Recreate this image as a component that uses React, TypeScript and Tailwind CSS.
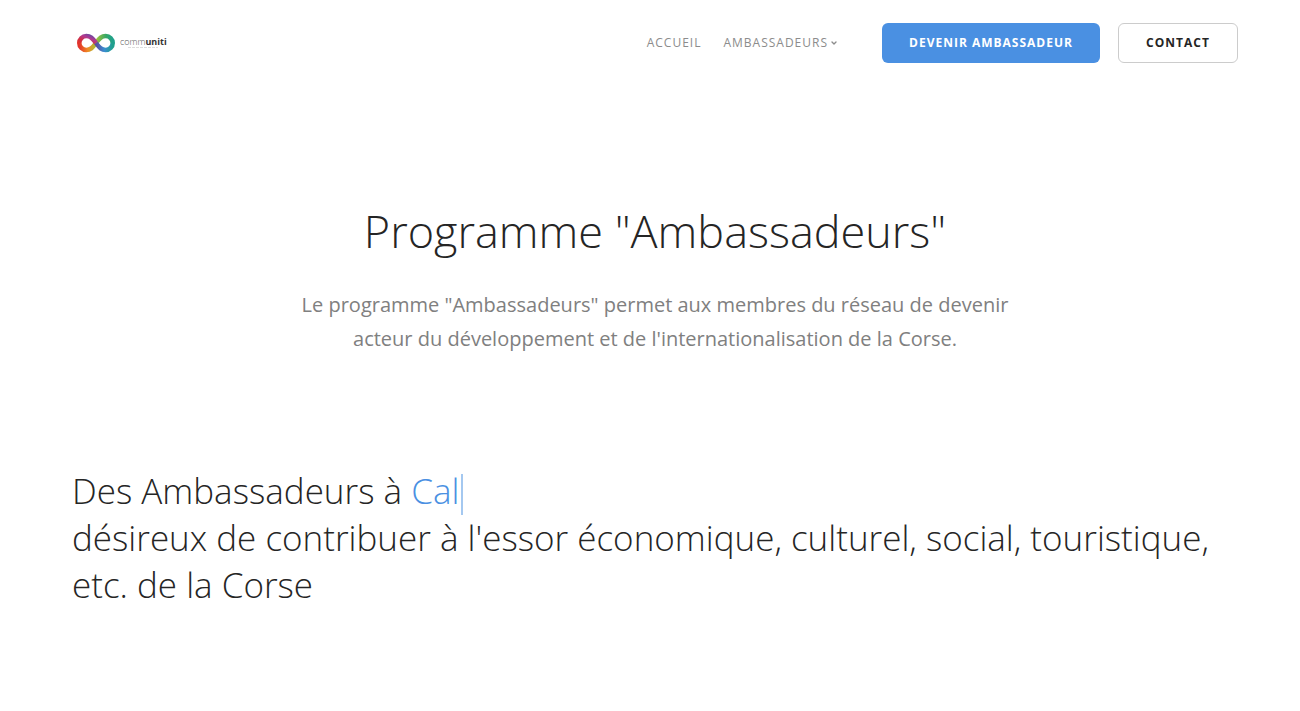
import { ChevronDown } from "lucide-react";

const navLink = "text-[12px] leading-5 tracking-[1px] text-[#8c8c8c]";

const Logo = () => (
  <svg
    viewBox="0 0 40 20"
    className="h-5 w-10"
    fill="none"
    strokeWidth="4.6"
    aria-hidden="true"
  >
    <defs>
      <linearGradient id="warm" x1="0" y1="1" x2="1" y2="0">
        <stop offset="0" stopColor="#e2352b" />
        <stop offset="0.3" stopColor="#cf2e45" />
        <stop offset="0.65" stopColor="#b03a92" />
        <stop offset="1" stopColor="#5b4aa0" />
      </linearGradient>
      <linearGradient id="warmLow" x1="0" y1="0" x2="1" y2="0">
        <stop offset="0" stopColor="#e2352b" />
        <stop offset="0.5" stopColor="#f08a24" />
        <stop offset="1" stopColor="#a5c23a" />
      </linearGradient>
      <linearGradient id="coolTop" x1="0" y1="0" x2="1" y2="0">
        <stop offset="0" stopColor="#a5c23a" />
        <stop offset="0.6" stopColor="#35a867" />
        <stop offset="1" stopColor="#1fa08c" />
      </linearGradient>
      <linearGradient id="coolLow" x1="0" y1="0" x2="1" y2="0">
        <stop offset="0" stopColor="#5b4aa0" />
        <stop offset="0.5" stopColor="#3a8fd0" />
        <stop offset="1" stopColor="#1fa08c" />
      </linearGradient>
    </defs>
    <path d="M3.3 10a7 7 0 0 0 7 7c4 0 6-2 9.7-7" stroke="url(#warmLow)" />
    <path d="M20 10c3.7-5 5.7-7 9.7-7a7 7 0 0 1 7 7" stroke="url(#coolTop)" />
    <path d="M3.3 10a7 7 0 0 1 7-7c4 0 6 2 9.7 7" stroke="url(#warm)" />
    <path d="M20 10c3.7 5 5.7 7 9.7 7a7 7 0 0 0 7-7" stroke="url(#coolLow)" />
  </svg>
);

const Header = () => (
  <header className="flex items-center justify-between pt-[23px] pr-[62px] pl-[76px]">
    <a href="#" className="flex items-center gap-1">
      <Logo />
      <span className="flex flex-col items-center text-[9px] leading-[10px] font-light text-[#555]">
        <span>
          comm<b className="font-bold text-[#333]">uniti</b>
        </span>
        {/* Tagline */}
        <svg viewBox="0 0 30 2" className="h-[2px] w-[30px]" aria-hidden="true">
          <path d="M0 .5h30" stroke="#ddd" strokeDasharray="3 1" />
        </svg>
      </span>
    </a>
    <div className="flex items-center">
      <nav className="mr-11 flex items-center gap-[22px]">
        <a href="#" className={navLink}>
          ACCUEIL
        </a>
        <a href="#" className={`${navLink} flex items-center gap-[2px]`}>
          AMBASSADEURS
          <ChevronDown className="size-2" strokeWidth={4} />
        </a>
      </nav>
      <div className="flex gap-[18px]">
        <button className="h-10 w-[218px] rounded-md bg-[#4a90e2] text-[12px] font-bold tracking-[1px] text-white">
          DEVENIR AMBASSADEUR
        </button>
        <button className="h-10 w-[120px] rounded-md border border-[#ccc] text-[12px] font-bold tracking-[1px] text-[#252525]">
          CONTACT
        </button>
      </div>
    </div>
  </header>
);

export default function App() {
  return (
    <div className="min-h-screen bg-white font-['Open_Sans',sans-serif] text-[#252525]">
      <Header />
      <main>
        <section className="pt-[140px] pl-[10px] text-center">
          <h1 className="text-[45px] leading-[56px] font-light">
            Programme "Ambassadeurs"
          </h1>
          <p className="mx-auto mt-[29px] max-w-[740px] text-[20px] leading-[34px] text-[#808080]">
            Le programme "Ambassadeurs" permet aux membres du réseau de devenir
            acteur du développement et de l'internationalisation de la Corse.
          </p>
        </section>
        <section className="px-[72px] pt-[111px]">
          <h2 className="text-[35px] leading-[47px] font-light">
            Des Ambassadeurs à <span className="text-[#4a90e2]">Cal</span>
            {/* Typing cursor */}
            <span className="-my-1 ml-[2px] inline-block h-[41px] w-[2px] bg-[#a4c8f0] align-middle" />
            <br />
            désireux de contribuer à l'essor économique, culturel, social,
            touristique, etc. de la Corse
          </h2>
        </section>
      </main>
    </div>
  );
}
